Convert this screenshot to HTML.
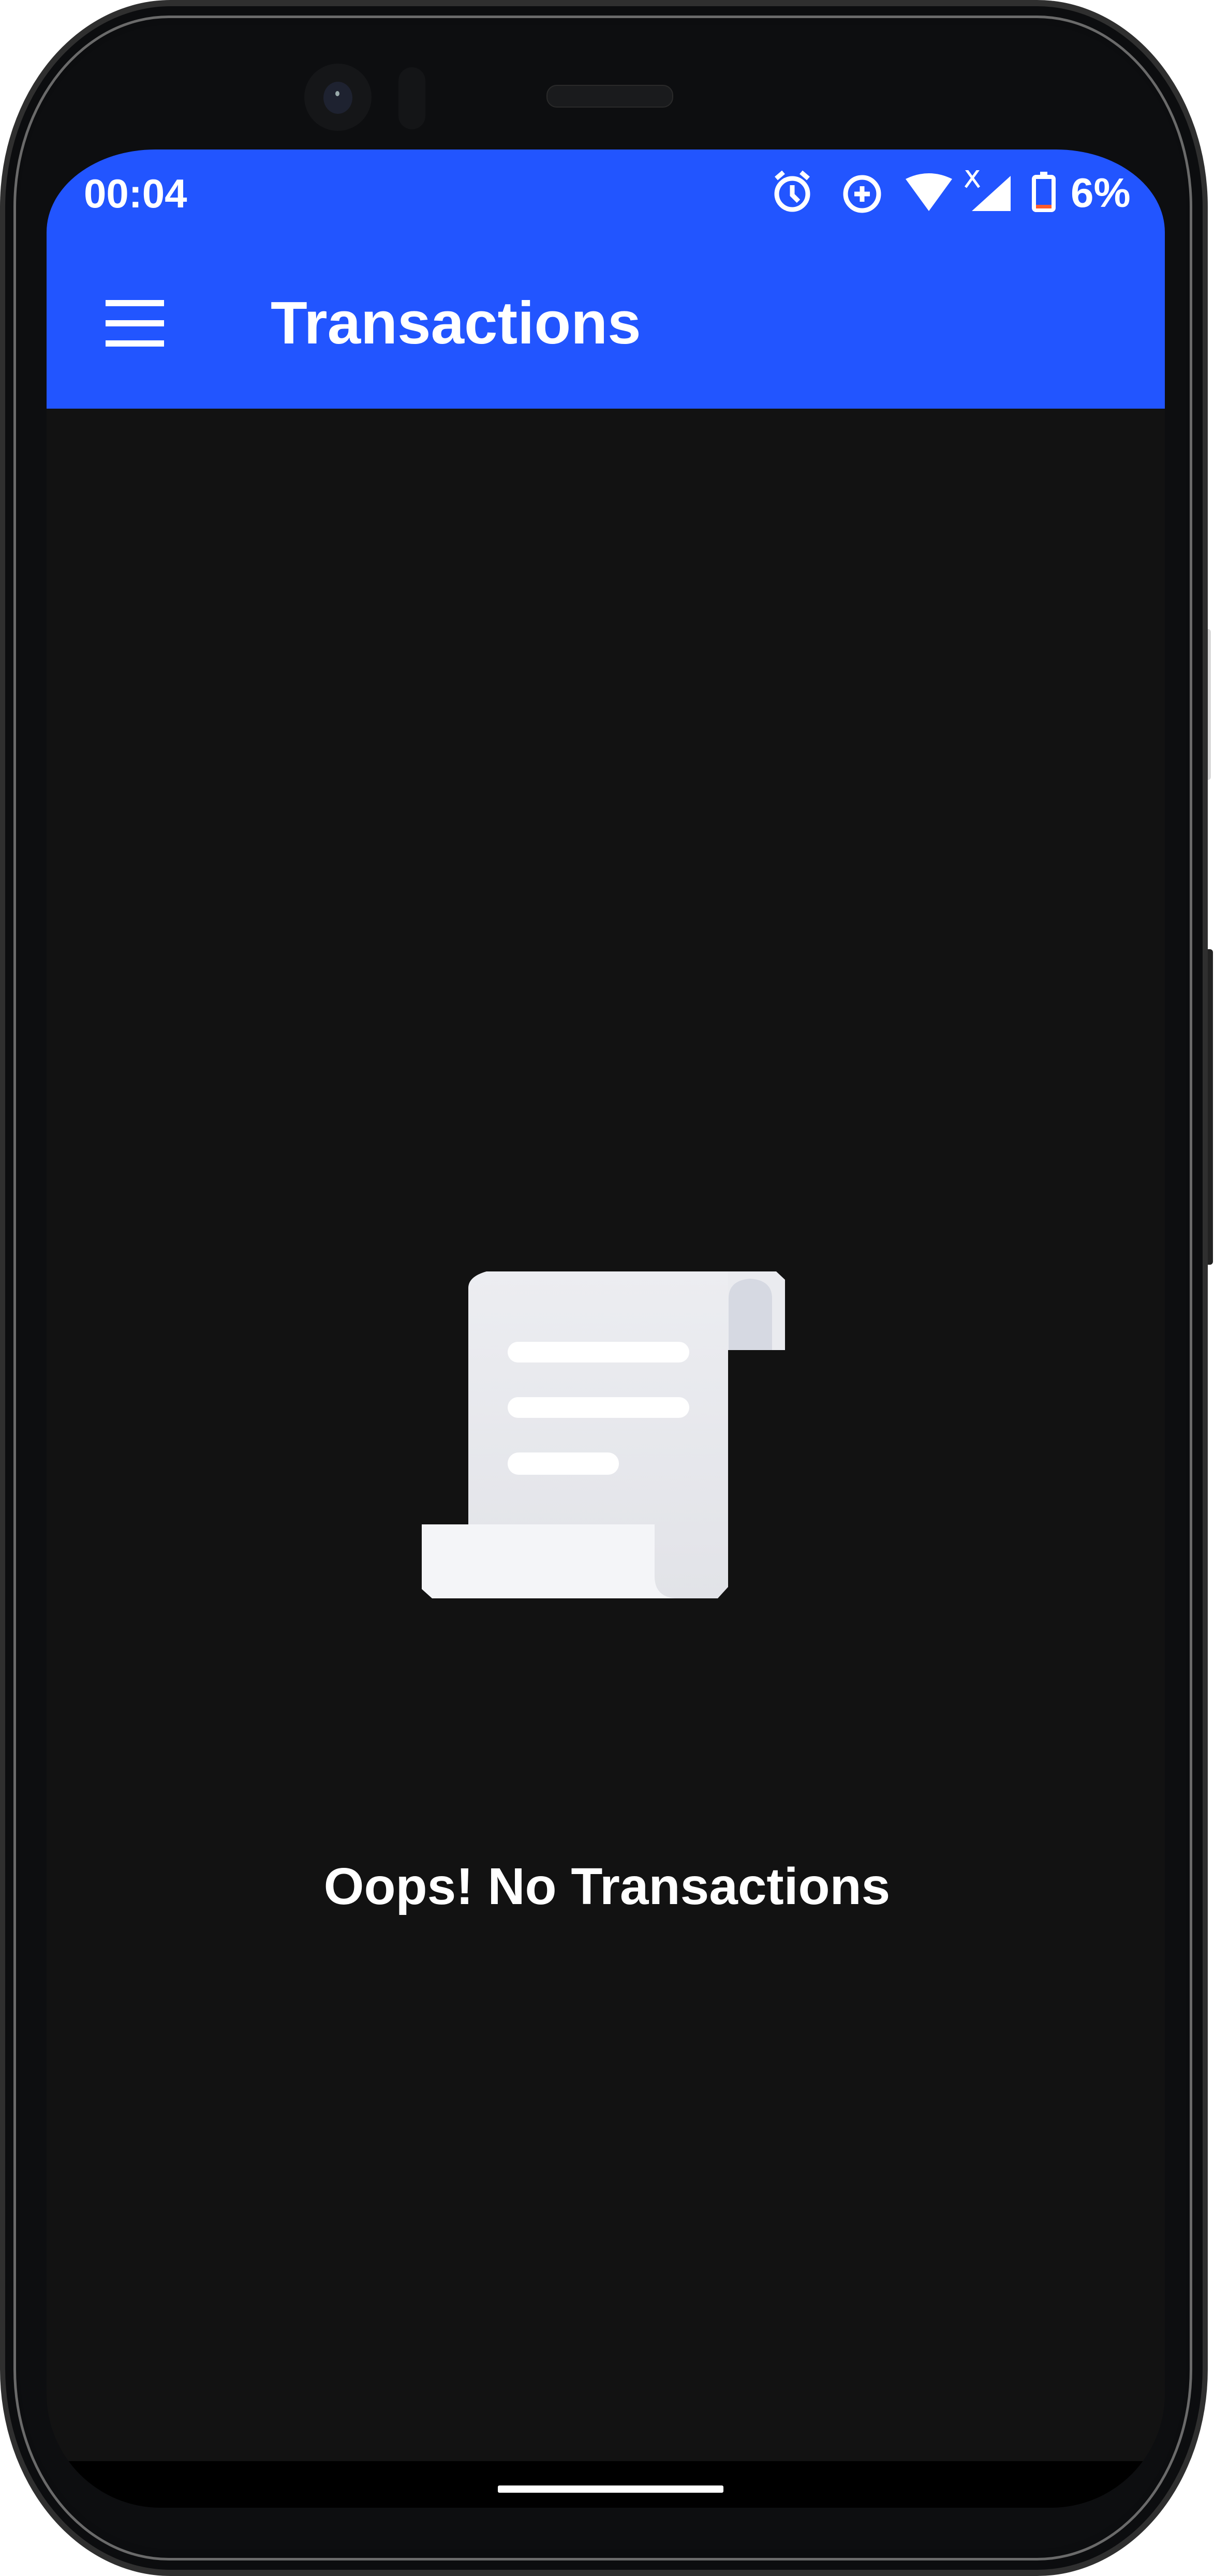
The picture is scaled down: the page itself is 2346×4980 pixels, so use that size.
<!DOCTYPE html>
<html><head><meta charset="utf-8"><style>
html,body{margin:0;padding:0;background:#fff;}
body{width:2346px;height:4980px;position:relative;overflow:hidden;font-family:"Liberation Sans",sans-serif;}
.abs{position:absolute;}
</style></head><body>
<div class="abs" style="left:2320px;top:1216px;width:20px;height:292px;background:#d8d8d8;border-radius:0 6px 6px 0;"></div>
<div class="abs" style="left:2320px;top:1835px;width:24px;height:610px;background:#222;border-radius:0 6px 6px 0;"></div>
<div class="abs" style="left:0;top:0;width:2334px;height:4980px;background:#2f2f2f;border-radius:330px/400px;"></div>
<div class="abs" style="left:10px;top:12px;width:2314px;height:4956px;background:#0c0d0f;border-radius:320px/390px;"></div>
<div class="abs" style="left:26px;top:30px;width:2278px;height:4920px;border:5px solid #6a6a6a;box-sizing:border-box;border-radius:300px/370px;"></div>
<div class="abs" style="left:38px;top:48px;width:2254px;height:4880px;background:#0d0e10;border-radius:290px/350px;"></div>
<div class="abs" style="left:588px;top:123px;width:130px;height:130px;border-radius:50%;background:#151618;"></div>
<div class="abs" style="left:625px;top:158px;width:56px;height:62px;border-radius:50%;background:#1e2230;"></div>
<div class="abs" style="left:648px;top:176px;width:8px;height:10px;border-radius:50%;background:#9aa;"></div>
<div class="abs" style="left:770px;top:130px;width:52px;height:120px;border-radius:26px;background:#141517;"></div>
<div class="abs" style="left:1056px;top:164px;width:241px;height:40px;border-radius:20px;background:#1a1b1d;border:2px solid #2a2a2a;"></div>
<div class="abs" style="left:90px;top:289px;width:2161px;height:4559px;background:#121212;border-radius:210px 210px 220px 220px/160px 160px 220px 220px;overflow:hidden;">
  <div class="abs" style="left:0;top:0;width:2161px;height:501px;background:#2255ff;"></div>
  <div class="abs" style="left:0;top:4469px;width:2161px;height:90px;background:#000;"></div>
  <div class="abs" style="left:872px;top:4516px;width:436px;height:14px;background:#fff;border-radius:3px;"></div>
  <div class="abs" style="left:72px;top:40px;color:#fff;font-size:78px;font-weight:bold;">00:04</div>
  <svg class="abs" style="left:1400px;top:40px;" width="800" height="90" viewBox="1490 329 800 90">
    <g fill="none" stroke="#fff" stroke-width="9">
      <circle cx="1531" cy="375" r="30"/>
      <path d="M1531 358v19l12 12"/>
      <path d="M1500 345l14-12M1562 345l-14-12"/>
      <circle cx="1666" cy="375" r="32"/>
      <path d="M1666 360v30M1651 375h30"/>
    </g>
    <path d="M1750 346q45-22 90 0l-45 62z" fill="#fff"/>
    <path d="M1866 326l26 36M1892 326l-26 36" stroke="#fff" stroke-width="5"/>
    <path d="M1953 340v68h-75z" fill="#fff"/>
    <rect x="1998" y="342" width="38" height="64" rx="4" fill="none" stroke="#fff" stroke-width="8"/>
    <rect x="2010" y="332" width="14" height="10" fill="#fff"/>
    <rect x="2002" y="396" width="30" height="7" fill="#ff5a2a"/>
  </svg>
  <div class="abs" style="left:1979px;top:38px;color:#fff;font-size:80px;font-weight:bold;">6%</div>
  <div class="abs" style="left:114px;top:291px;width:113px;height:12px;background:#fff;"></div>
  <div class="abs" style="left:114px;top:330px;width:113px;height:12px;background:#fff;"></div>
  <div class="abs" style="left:114px;top:369px;width:113px;height:12px;background:#fff;"></div>
  <div class="abs" style="left:433px;top:268px;color:#fff;font-size:116px;font-weight:bold;white-space:nowrap;">Transactions</div>
</div>
<svg class="abs" style="left:800px;top:2440px;" width="740" height="680" viewBox="800 2440 740 680">
  <defs>
    <linearGradient id="pg" x1="0" y1="0" x2="0" y2="1"><stop offset="0" stop-color="#ecedf1"/><stop offset="1" stop-color="#e2e3e8"/></linearGradient>
  </defs>
  <path d="M1380 2458h120l17 16v136h-137z" fill="#eaebef"/>
  <path d="M1408 2610v-100q0-35 42-38q42 3 42 38v100z" fill="#d6d9e2"/>
  <path d="M940 2458h467v610l-20 22h-482v-600q0-22 35-32z" fill="url(#pg)"/>
  <path d="M815 2947h450v100q0 40 40 43h-470l-20-18z" fill="#f4f5f8"/>
  <rect x="981" y="2594" width="351" height="40" rx="20" fill="#fff"/>
  <rect x="981" y="2701" width="351" height="40" rx="20" fill="#fff"/>
  <rect x="981" y="2808" width="215" height="43" rx="21" fill="#fff"/>
</svg>
<div class="abs" style="left:0;top:3590px;width:2346px;text-align:center;color:#fff;font-size:100px;font-weight:bold;">Oops! No Transactions</div>
</body></html>
